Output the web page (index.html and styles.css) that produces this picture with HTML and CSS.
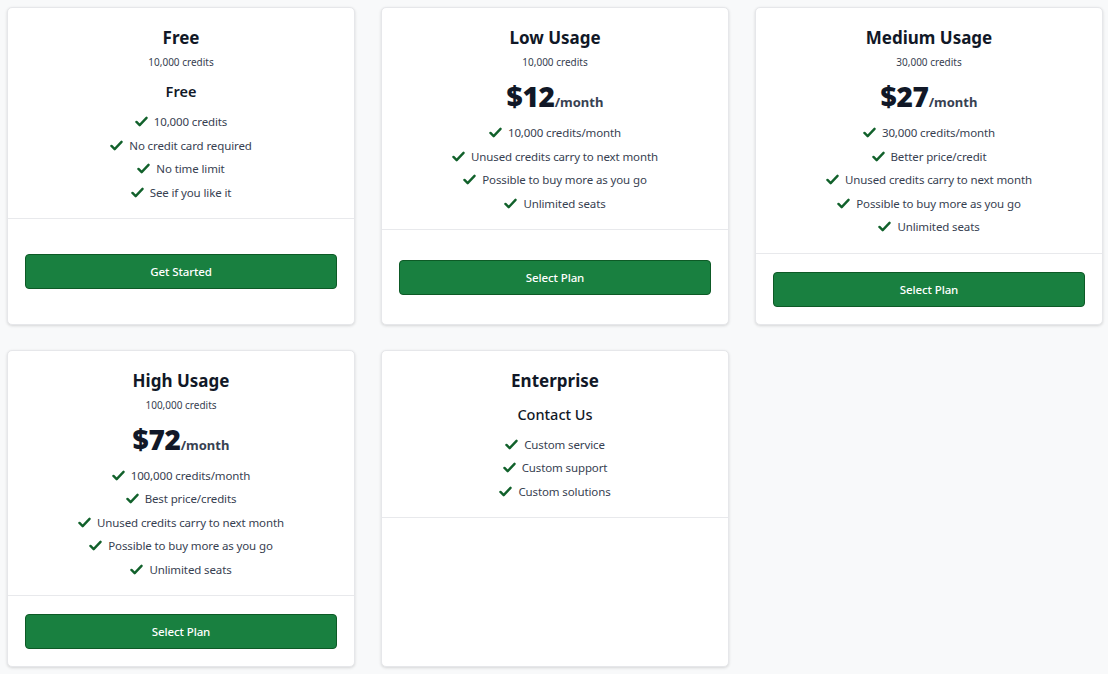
FILE: index.html
```html
<!DOCTYPE html>
<html lang="en">
<head>
<meta charset="utf-8">
<title>Pricing</title>
<link rel="stylesheet" href="styles.css">
</head>
<body>
<div class="grid">
  <div class="card">
    <div class="body">
      <h2 class="title">Free</h2>
      <div class="sub">10,000 credits</div>
      <div class="price-text">Free</div>
      <ul class="features">
        <li><svg class="chk" viewBox="0 0 14 12"><path d="M1.5 6.5 L5 10 L12.5 2"/></svg>10,000 credits</li>
        <li><svg class="chk" viewBox="0 0 14 12"><path d="M1.5 6.5 L5 10 L12.5 2"/></svg>No credit card required</li>
        <li><svg class="chk" viewBox="0 0 14 12"><path d="M1.5 6.5 L5 10 L12.5 2"/></svg>No time limit</li>
        <li><svg class="chk" viewBox="0 0 14 12"><path d="M1.5 6.5 L5 10 L12.5 2"/></svg>See if you like it</li>
      </ul>
    </div>
    <div class="foot"><button class="btn">Get Started</button></div>
  </div>
  <div class="card">
    <div class="body">
      <h2 class="title">Low Usage</h2>
      <div class="sub">10,000 credits</div>
      <div class="price"><span class="amt">$12</span><span class="per">/month</span></div>
      <ul class="features">
        <li><svg class="chk" viewBox="0 0 14 12"><path d="M1.5 6.5 L5 10 L12.5 2"/></svg>10,000 credits/month</li>
        <li><svg class="chk" viewBox="0 0 14 12"><path d="M1.5 6.5 L5 10 L12.5 2"/></svg>Unused credits carry to next month</li>
        <li><svg class="chk" viewBox="0 0 14 12"><path d="M1.5 6.5 L5 10 L12.5 2"/></svg>Possible to buy more as you go</li>
        <li><svg class="chk" viewBox="0 0 14 12"><path d="M1.5 6.5 L5 10 L12.5 2"/></svg>Unlimited seats</li>
      </ul>
    </div>
    <div class="foot"><button class="btn">Select Plan</button></div>
  </div>
  <div class="card">
    <div class="body">
      <h2 class="title">Medium Usage</h2>
      <div class="sub">30,000 credits</div>
      <div class="price"><span class="amt">$27</span><span class="per">/month</span></div>
      <ul class="features">
        <li><svg class="chk" viewBox="0 0 14 12"><path d="M1.5 6.5 L5 10 L12.5 2"/></svg>30,000 credits/month</li>
        <li><svg class="chk" viewBox="0 0 14 12"><path d="M1.5 6.5 L5 10 L12.5 2"/></svg>Better price/credit</li>
        <li><svg class="chk" viewBox="0 0 14 12"><path d="M1.5 6.5 L5 10 L12.5 2"/></svg>Unused credits carry to next month</li>
        <li><svg class="chk" viewBox="0 0 14 12"><path d="M1.5 6.5 L5 10 L12.5 2"/></svg>Possible to buy more as you go</li>
        <li><svg class="chk" viewBox="0 0 14 12"><path d="M1.5 6.5 L5 10 L12.5 2"/></svg>Unlimited seats</li>
      </ul>
    </div>
    <div class="foot"><button class="btn">Select Plan</button></div>
  </div>
  <div class="card">
    <div class="body">
      <h2 class="title">High Usage</h2>
      <div class="sub">100,000 credits</div>
      <div class="price"><span class="amt">$72</span><span class="per">/month</span></div>
      <ul class="features">
        <li><svg class="chk" viewBox="0 0 14 12"><path d="M1.5 6.5 L5 10 L12.5 2"/></svg>100,000 credits/month</li>
        <li><svg class="chk" viewBox="0 0 14 12"><path d="M1.5 6.5 L5 10 L12.5 2"/></svg>Best price/credits</li>
        <li><svg class="chk" viewBox="0 0 14 12"><path d="M1.5 6.5 L5 10 L12.5 2"/></svg>Unused credits carry to next month</li>
        <li><svg class="chk" viewBox="0 0 14 12"><path d="M1.5 6.5 L5 10 L12.5 2"/></svg>Possible to buy more as you go</li>
        <li><svg class="chk" viewBox="0 0 14 12"><path d="M1.5 6.5 L5 10 L12.5 2"/></svg>Unlimited seats</li>
      </ul>
    </div>
    <div class="foot"><button class="btn">Select Plan</button></div>
  </div>
  <div class="card">
    <div class="body">
      <h2 class="title">Enterprise</h2>
      <div class="price-text contact">Contact Us</div>
      <ul class="features">
        <li><svg class="chk" viewBox="0 0 14 12"><path d="M1.5 6.5 L5 10 L12.5 2"/></svg>Custom service</li>
        <li><svg class="chk" viewBox="0 0 14 12"><path d="M1.5 6.5 L5 10 L12.5 2"/></svg>Custom support</li>
        <li><svg class="chk" viewBox="0 0 14 12"><path d="M1.5 6.5 L5 10 L12.5 2"/></svg>Custom solutions</li>
      </ul>
    </div>
    <div class="foot"></div>
  </div>
</div>
</body>
</html>
```
FILE: styles.css
```css
html, body {
  margin: 0;
  background: #f8f9fa;
}
body {
  padding: 7px 5px 7px 7px;
  font-family: "Noto Sans", "Open Sans", sans-serif;
  color: #1f2937;
}
.grid {
  display: grid;
  grid-template-columns: repeat(3, 348px);
  column-gap: 26px;
  row-gap: 25px;
}
.card {
  background: #fff;
  border: 1px solid #e6e7ea;
  border-radius: 5px;
  box-shadow: 0 1px 3px rgba(0,0,0,0.14);
  display: flex;
  flex-direction: column;
}
.body {
  padding: 19px 17px 14px;
  text-align: center;
  border-bottom: 1px solid #e8e9ec;
}
.title {
  margin: 0;
  font-size: 17px;
  line-height: 22px;
  font-weight: 700;
  color: #111827;
}
.sub {
  margin-top: 6px;
  font-size: 10px;
  line-height: 14px;
  color: #374151;
}
.price-text {
  margin: 11px 0 8px;
  font-size: 14.5px;
  line-height: 22px;
  font-weight: 600;
  color: #111827;
}
.contact {
  font-weight: 500;
}
.price {
  margin: 11px 0 8px;
  height: 33px;
  display: flex;
  justify-content: center;
  align-items: baseline;
  color: #111827;
}
.amt {
  font-size: 28px;
  line-height: 33px;
  font-weight: 900;
  letter-spacing: -0.3px;
}
.per {
  font-size: 13px;
  line-height: 16px;
  font-weight: 700;
  color: #374151;
}
.features {
  list-style: none;
  margin: 0;
  padding: 0;
}
.features li {
  font-size: 11.5px;
  letter-spacing: -0.12px;
  line-height: 23.5px;
  color: #374151;
  display: flex;
  justify-content: center;
  align-items: center;
}
.chk {
  width: 13px;
  height: 11px;
  margin-right: 6px;
  fill: none;
  stroke: #11612b;
  stroke-width: 2.6;
  stroke-linecap: round;
  stroke-linejoin: round;
}
.foot {
  flex: 1;
  display: flex;
  align-items: center;
  padding: 18px 17px 17px;
}
.btn {
  width: 100%;
  height: 35px;
  background: #198040;
  border: 1px solid #0d5a26;
  border-radius: 4px;
  color: #fff;
  font-family: "Noto Sans", "Open Sans", sans-serif;
  font-size: 11.5px;
  font-weight: 500;
  letter-spacing: -0.1px;
  cursor: pointer;
}
```
